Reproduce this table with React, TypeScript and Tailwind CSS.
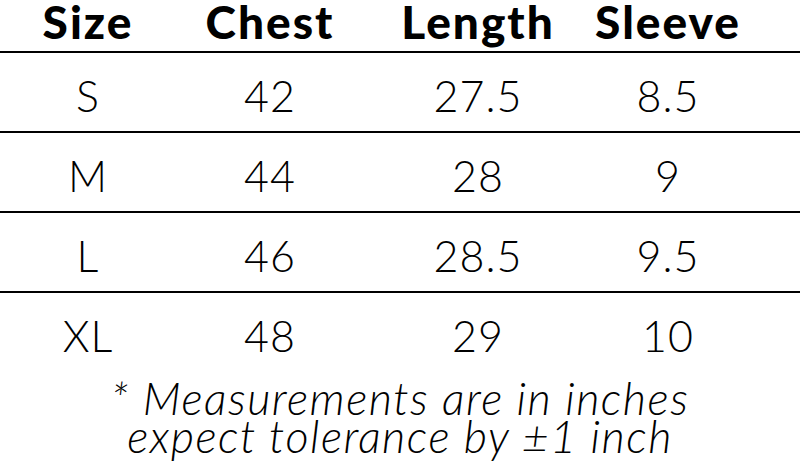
export default function App() {
  const rows = [
    ["S", "42", "27.5", "8.5"],
    ["M", "44", "28", "9"],
    ["L", "46", "28.5", "9.5"],
    ["XL", "48", "29", "10"],
  ];
  const cols = "grid grid-cols-[176px_188px_228px_152px]";
  return (
    <div className="w-[800px] h-[467px] bg-white text-black overflow-hidden" style={{ fontFamily: "Lato, 'Open Sans', sans-serif" }}>
      <div className={`${cols} h-[51px] items-start text-[46px] font-black leading-[44px] tracking-[2px]`}>
        <div className="text-center">Size</div>
        <div className="text-center">Chest</div>
        <div className="text-center">Length</div>
        <div className="text-center">Sleeve</div>
      </div>
      {rows.map((r, i) => (
        <div key={i} className={`${cols} h-[80px] border-t-2 border-black items-center text-[43px] font-light leading-none tracking-[1px]`}>
          {r.map((c, j) => (
            <div key={j} className="text-center pt-[6px]">{c}</div>
          ))}
        </div>
      ))}
      <div className="mt-[8px] text-center italic font-light text-[45px] leading-[38px] tracking-[1.5px]">
        <div>* Measurements are in inches</div>
        <div>expect tolerance by ±1 inch</div>
      </div>
    </div>
  );
}
